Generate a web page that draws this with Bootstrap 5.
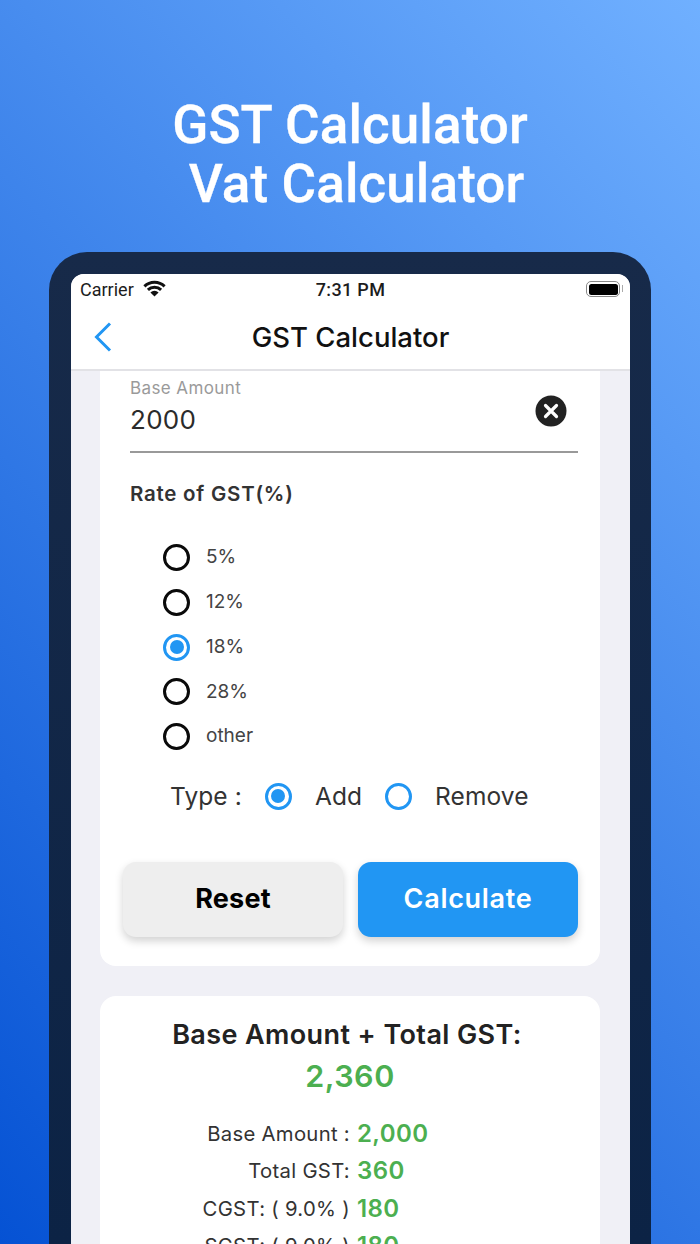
<!DOCTYPE html>
<html lang="en">
<head>
<meta charset="utf-8">
<title>GST Calculator</title>
<link href="https://cdn.jsdelivr.net/npm/bootstrap@5.3.0/dist/css/bootstrap.min.css" rel="stylesheet">
<style>
html,body{height:1244px;overflow:hidden}
body{width:700px;font-family:Inter,"Liberation Sans",sans-serif;background:linear-gradient(48deg,#0552d4 0%,#70b0ff 100%);color:#222}
.hero-title{font-family:Roboto,"Liberation Sans",sans-serif;font-weight:500;font-size:53px;line-height:59px;letter-spacing:.1px;color:#fff;text-align:center;padding-top:96px;height:252px;margin:0;-webkit-text-stroke:.3px #fff}
.hero-title span{display:block}
.hero-title .second{padding-left:13px}
.device{margin:0 49px;width:602px;height:992px;background:linear-gradient(to bottom,#172a49,#0c2345);border-radius:38px 38px 0 0;padding:22px 21px 0 22px}
.screen{height:970px;background:#f0f0f6;border-radius:13px 13px 0 0;overflow:hidden}
.status-row{height:32px;background:#fff;padding:0 9px;font-family:Roboto,"Liberation Sans",sans-serif;font-size:18px;color:#1c1c1c;position:relative}
.status-time{position:absolute;left:0;right:0;text-align:center;top:2px;font-weight:500;letter-spacing:.35px}
.status-left{padding-top:2px;gap:9px}
.batt{width:34px;height:16px;border:1.5px solid #888;border-radius:5px;padding:1.5px;margin-top:7px;margin-right:1px;position:relative}
.batt i{display:block;height:100%;background:#000;border-radius:2.5px}
.batt::after{content:"";position:absolute;right:-4px;top:3px;width:1.5px;height:7px;background:#aaa}
.nav-row{height:65px;background:#fff;border-bottom:2px solid #e2e2e6;position:relative}
.nav-heading{font-size:27.5px;font-weight:500;color:#111;line-height:62px;text-align:center;margin:0}
.nav-back{position:absolute;left:22px;top:15px}
.panel-form{margin:0 30px 30px 29px;height:595px;background:#fff;border-radius:0 0 16px 16px;padding:5px 22px 0 30px;position:relative}
.field-label{font-size:17px;color:#9a9a9a;line-height:24px;letter-spacing:.4px}
.field-value{font-size:26px;color:#2b2b2b;line-height:40px;letter-spacing:.3px;height:53px;border-bottom:2px solid #999}
.clear-btn{position:absolute;right:33px;top:24px}
.rate-title{font-size:20.5px;font-weight:600;color:#333;margin-top:27px;line-height:28px;letter-spacing:.75px}
.rate-list{margin-top:36px;padding-left:33px;gap:17.75px}
.rate-item{height:27px;font-size:19px;color:#444;gap:16px}
.dot-black,.dot-blue{width:27px;height:27px;border-radius:50%;border:3.5px solid #0a0a0a;flex:none;display:flex;align-items:center;justify-content:center}
.dot-blue{border-color:#2196f3}
.dot-blue i{width:14px;height:14px;border-radius:50%;background:#2196f3}
.type-row{margin-top:21px;height:50px;padding-left:40px;font-size:24.5px;color:#333;letter-spacing:.1px;font-weight:400}
.type-row .dot-blue{margin-left:23px;margin-right:23px}
.btn-row{margin-top:41px;margin-left:-7px;gap:15px}
.btn-reset,.btn-calc{width:220px;height:75px;border:0;border-radius:13px;font-size:27px;font-weight:700;box-shadow:0 4px 8px rgba(0,0,0,.18);letter-spacing:.2px}
.btn-reset,.btn-reset:hover{background:#eee;color:#000}
.btn-calc,.btn-calc:hover{background:#2196f3;color:#fff;font-weight:600;letter-spacing:.7px}
.panel-result{margin:0 30px 0 29px;height:300px;background:#fff;border-radius:16px 16px 0 0;padding-top:20px;text-align:center}
.result-heading{font-size:27px;font-weight:600;line-height:38px;color:#222;margin:0;letter-spacing:.4px;padding-right:6px}
.result-total{font-size:30.5px;font-weight:600;color:#4caf50;line-height:44px;letter-spacing:.5px}
.result-lines{margin-top:17px}
.result-line{height:37.5px;gap:7px;align-items:center;white-space:nowrap}
.result-name{width:250px;text-align:right;font-size:20.3px;color:#333;letter-spacing:.3px}
.result-num{font-size:24px;font-weight:600;color:#4caf50;letter-spacing:.4px;line-height:30px}
</style>
</head>
<body>
<h1 class="hero-title"><span>GST Calculator</span><span class="second">Vat Calculator</span></h1>
<div class="device">
  <div class="screen">
    <div class="status-row d-flex justify-content-between">
      <div class="status-left d-flex align-items-start">
        <span>Carrier</span>
        <svg width="23" height="17" viewBox="0 0 23 17" class="mt-1" aria-hidden="true"><path d="M1.4 6.4a14.4 14.4 0 0 1 20.2 0M4.9 9.9a9.5 9.5 0 0 1 13.2 0" fill="none" stroke="#111" stroke-width="3"/><path d="M11.5 16.5 7.4 12.4a6 6 0 0 1 8.2 0z" fill="#111"/></svg>
      </div>
      <div class="status-time">7:31 PM</div>
      <div class="batt"><i></i></div>
    </div>
    <div class="nav-row">
      <a class="nav-back" href="#" aria-label="Back"><svg width="20" height="32" viewBox="0 0 20 32"><path d="M17 2.5 3.5 16 17 29.5" fill="none" stroke="#2196f3" stroke-width="3"/></svg></a>
      <h2 class="nav-heading">GST Calculator</h2>
    </div>
    <div class="panel-form">
      <div class="field-label">Base Amount</div>
      <div class="field-value">2000</div>
      <div class="clear-btn"><svg width="32" height="32" viewBox="0 0 32 32"><circle cx="16" cy="16" r="15.5" fill="#222"/><path d="M10.5 10.5l11 11M21.5 10.5l-11 11" stroke="#fff" stroke-width="3.2" stroke-linecap="round"/></svg></div>
      <div class="rate-title">Rate of GST(%)</div>
      <div class="rate-list d-flex flex-column">
        <div class="rate-item d-flex align-items-center"><span class="dot-black"></span><span>5%</span></div>
        <div class="rate-item d-flex align-items-center"><span class="dot-black"></span><span>12%</span></div>
        <div class="rate-item d-flex align-items-center"><span class="dot-blue"><i></i></span><span>18%</span></div>
        <div class="rate-item d-flex align-items-center"><span class="dot-black"></span><span>28%</span></div>
        <div class="rate-item d-flex align-items-center"><span class="dot-black"></span><span>other</span></div>
      </div>
      <div class="type-row d-flex align-items-center">
        <span>Type :</span><span class="dot-blue"><i></i></span><span>Add</span><span class="dot-blue"></span><span>Remove</span>
      </div>
      <div class="btn-row d-flex">
        <button type="button" class="btn btn-reset">Reset</button>
        <button type="button" class="btn btn-calc">Calculate</button>
      </div>
    </div>
    <div class="panel-result">
      <h3 class="result-heading">Base Amount + Total GST:</h3>
      <div class="result-total">2,360</div>
      <div class="result-lines">
        <div class="result-line d-flex"><span class="result-name">Base Amount :</span><span class="result-num">2,000</span></div>
        <div class="result-line d-flex"><span class="result-name">Total GST:</span><span class="result-num">360</span></div>
        <div class="result-line d-flex"><span class="result-name">CGST: ( 9.0% )</span><span class="result-num">180</span></div>
        <div class="result-line d-flex"><span class="result-name">SGST: ( 9.0% )</span><span class="result-num">180</span></div>
      </div>
    </div>
  </div>
</div>
<script src="https://cdn.jsdelivr.net/npm/bootstrap@5.3.0/dist/js/bootstrap.bundle.min.js"></script>
</body>
</html>
